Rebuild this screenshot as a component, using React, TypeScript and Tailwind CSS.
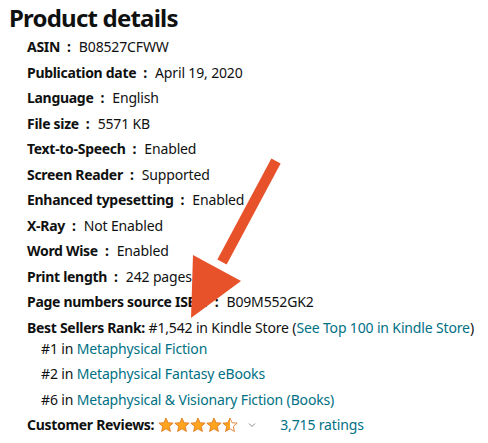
import React from 'react';

const details: { label: string; value: string }[] = [
  { label: 'ASIN', value: 'B08527CFWW' },
  { label: 'Publication date', value: 'April 19, 2020' },
  { label: 'Language', value: 'English' },
  { label: 'File size', value: '5571 KB' },
  { label: 'Text-to-Speech', value: 'Enabled' },
  { label: 'Screen Reader', value: 'Supported' },
  { label: 'Enhanced typesetting', value: 'Enabled' },
  { label: 'X-Ray', value: 'Not Enabled' },
  { label: 'Word Wise', value: 'Enabled' },
  { label: 'Print length', value: '242 pages' },
  { label: 'Page numbers source ISBN', value: 'B09M552GK2' },
];

const ranks = [
  { rank: '#1', name: 'Metaphysical Fiction' },
  { rank: '#2', name: 'Metaphysical Fantasy eBooks' },
  { rank: '#6', name: 'Metaphysical & Visionary Fiction (Books)' },
];

function Star({ half = false }: { half?: boolean }) {
  return (
    <svg width="16" height="16" viewBox="0 0 24 24" className="shrink-0">
      <defs>
        <linearGradient id="halfFill">
          <stop offset="50%" stopColor="#FFA41C" />
          <stop offset="50%" stopColor="#ffffff" />
        </linearGradient>
      </defs>
      <path
        d="M12 1.5l3.1 7.1 7.6.6-5.8 5 1.8 7.5L12 17.7l-6.7 4 1.8-7.5-5.8-5 7.6-.6z"
        fill={half ? 'url(#halfFill)' : '#FFA41C'}
        stroke="#DE7921"
        strokeWidth="1.3"
        strokeLinejoin="round"
      />
    </svg>
  );
}

export default function App() {
  return (
    <div
      className="relative w-[488px] h-[443px] overflow-hidden bg-white text-[#0F1111]"
      style={{ fontFamily: '"Noto Sans", Arial, sans-serif' }}
    >
      <h2 className="pl-[9px] pt-[2px] text-[24px] leading-[32px] font-bold tracking-[-0.8px]">
        Product details
      </h2>

      <ul className="mt-[3px] pl-[27px] text-[14px] leading-[20px] tracking-[-0.15px]">
        {details.map((d) => (
          <li key={d.label} className="mb-[5.5px]">
            <span className="font-bold tracking-[-0.3px]">{d.label}</span>
            <span className="font-bold ml-[7px] mr-[8px]">:</span>
            <span>{d.value}</span>
          </li>
        ))}
        <li className="mb-[5.5px]">
          <span className="font-bold tracking-[-0.3px]">Best Sellers Rank:</span> #1,542 in Kindle Store (
          <span className="text-[#007185]">See Top 100 in Kindle Store</span>)
          <ul className="pl-[14px] mt-[1px]">
            {ranks.map((r) => (
              <li key={r.rank} className="mb-[5.5px] last:mb-0">
                {r.rank} in <span className="text-[#007185]">{r.name}</span>
              </li>
            ))}
          </ul>
        </li>
        <li className="flex items-center">
          <span className="font-bold tracking-[-0.3px]">Customer Reviews:</span>
          <span className="ml-[4px] flex items-center">
            <Star />
            <Star />
            <Star />
            <Star />
            <Star half />
          </span>
          <svg width="8" height="6" viewBox="0 0 8 6" className="ml-[10px]">
            <path d="M1 1.5l3 3 3-3" fill="none" stroke="#8a8a8a" strokeWidth="1" />
          </svg>
          <span className="ml-[24px] text-[#007185]">3,715 ratings</span>
        </li>
      </ul>

      {/* annotation arrow */}
      <svg className="absolute left-0 top-0 pointer-events-none" width="488" height="443">
        <line x1="276" y1="161" x2="222" y2="262" stroke="#E8522B" strokeWidth="10.5" />
        <polygon points="193,255 241,281 191,318" fill="#E8522B" />
      </svg>
    </div>
  );
}
